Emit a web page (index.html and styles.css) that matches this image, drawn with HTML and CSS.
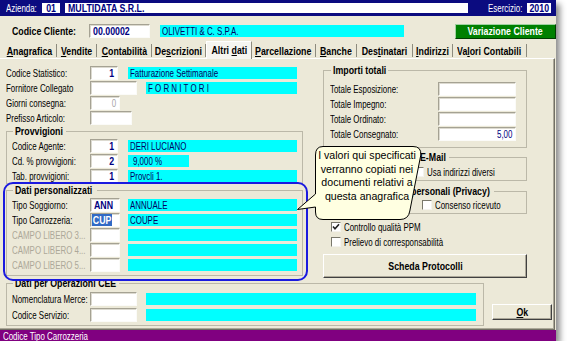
FILE: index.html
```html
<!DOCTYPE html>
<html lang="it">
<head>
    <meta charset="UTF-8">
    <title>Anagrafica Clienti - Altri dati</title>
    <link rel="stylesheet" href="styles.css">
</head>
<body>
    <div class="window">
        <div class="topbar">
            <span class="tb-label az tx">Azienda:</span>
            <span class="tb-box tb-code"><span class="tx b c">01</span></span>
            <span class="tb-box tb-name"><span class="tx b">MULTIDATA S.R.L.</span></span>
            <span class="tb-label es tx">Esercizio:</span>
            <span class="tb-box tb-year"><span class="tx b c">2010</span></span>
        </div>

        <div class="client-row">
            <span class="client-label tx b">Codice Cliente:</span>
            <span class="field client-code"><span class="tx b">00.00002</span></span>
            <span class="cyan client-name"><span class="tx">OLIVETTI &amp; C. S.P.A.</span></span>
            <span class="btn-green"><span class="tx b c">Variazione Cliente</span></span>
        </div>

        <div class="tabs">
            <span class="tab t-ana"><span class="tx b c"><u>A</u>nagrafica</span></span>
            <span class="tab t-ven"><span class="tx b c"><u>V</u>endite</span></span>
            <span class="tab t-con"><span class="tx b c"><u>C</u>ontabilità</span></span>
            <span class="tab t-des"><span class="tx b c">De<u>s</u>crizioni</span></span>
            <span class="tab t-alt active"><span class="tx b c">Altri <u>d</u>ati</span></span>
            <span class="tab t-par"><span class="tx b c"><u>P</u>arcellazione</span></span>
            <span class="tab t-ban"><span class="tx b c"><u>B</u>anche</span></span>
            <span class="tab t-dst"><span class="tx b c">Des<u>t</u>inatari</span></span>
            <span class="tab t-ind"><span class="tx b c"><u>I</u>ndirizzi</span></span>
            <span class="tab t-val"><span class="tx b c">Va<u>l</u>ori Contabili</span></span>
        </div>

        <div class="page">
            <div class="cols">
                <div class="left-col">
                    <div class="row">
                        <span class="lbl tx">Codice Statistico:</span>
                        <span class="field num w28"><span class="tx b r">1</span></span>
                        <span class="cyan"><span class="tx">Fatturazione Settimanale</span></span>
                    </div>
                    <div class="row">
                        <span class="lbl tx">Fornitore Collegato</span>
                        <span class="field w47"></span>
                        <span class="cyan spaced"><span class="tx">F O R N I T O R I</span></span>
                    </div>
                    <div class="row">
                        <span class="lbl tx">Giorni consegna:</span>
                        <span class="field num w30 dim"><span class="tx r">0</span></span>
                    </div>
                    <div class="row">
                        <span class="lbl tx">Prefisso Articolo:</span>
                        <span class="field w42"></span>
                    </div>

                    <fieldset class="group provv">
                        <legend class="lg-provv"><span class="tx b">Provvigioni</span></legend>
                        <div class="row">
                            <span class="lbl tx">Codice Agente:</span>
                            <span class="field num w28"><span class="tx b r">1</span></span>
                            <span class="cyan"><span class="tx">DERI LUCIANO</span></span>
                        </div>
                        <div class="row">
                            <span class="lbl tx">Cd. % provvigioni:</span>
                            <span class="field num w28"><span class="tx b r">2</span></span>
                            <span class="cyan short"><span class="tx">9,000 %</span></span>
                        </div>
                        <div class="row">
                            <span class="lbl tx">Tab. provvigioni:</span>
                            <span class="field num w28"><span class="tx b r">1</span></span>
                            <span class="cyan"><span class="tx">Provcli 1.</span></span>
                        </div>
                    </fieldset>

                    <fieldset class="group personal">
                        <legend class="lg-pers"><span class="tx b">Dati personalizzati</span></legend>
                        <div class="row">
                            <span class="lbl tx">Tipo Soggiorno:</span>
                            <span class="field w30"><span class="tx b">ANN</span></span>
                            <span class="cyan wide-gap"><span class="tx">ANNUALE</span></span>
                        </div>
                        <div class="row">
                            <span class="lbl tx">Tipo Carrozzeria:</span>
                            <span class="field w30"><span class="tx b selected">CUP</span></span>
                            <span class="cyan wide-gap"><span class="tx">COUPE</span></span>
                        </div>
                        <div class="row">
                            <span class="lbl tx off">CAMPO LIBERO 3...</span>
                            <span class="field w30"></span>
                            <span class="cyan wide-gap"></span>
                        </div>
                        <div class="row">
                            <span class="lbl tx off">CAMPO LIBERO 4...</span>
                            <span class="field w30"></span>
                            <span class="cyan wide-gap"></span>
                        </div>
                        <div class="row">
                            <span class="lbl tx off">CAMPO LIBERO 5...</span>
                            <span class="field w30"></span>
                            <span class="cyan wide-gap"></span>
                        </div>
                    </fieldset>
                </div>

                <div class="right-col">
                    <fieldset class="group totals">
                        <legend class="lg-tot"><span class="tx b">Importi totali</span></legend>
                        <div class="row">
                            <span class="lbl tx">Totale Esposizione:</span>
                            <span class="field num w78"></span>
                        </div>
                        <div class="row">
                            <span class="lbl tx">Totale Impegno:</span>
                            <span class="field num w78"></span>
                        </div>
                        <div class="row">
                            <span class="lbl tx">Totale Ordinato:</span>
                            <span class="field num w78"></span>
                        </div>
                        <div class="row">
                            <span class="lbl tx">Totale Consegnato:</span>
                            <span class="field num w78"><span class="tx r">5,00</span></span>
                        </div>
                    </fieldset>

                    <fieldset class="group email">
                        <legend class="lg-mail"><span class="tx b">E-Mail</span></legend>
                        <div class="check-row">
                            <span class="chk"></span><span class="tx">Usa indirizzi diversi</span>
                        </div>
                    </fieldset>

                    <fieldset class="group privacy">
                        <legend class="lg-priv"><span class="tx b">Dati personali (Privacy)</span></legend>
                        <div class="check-row">
                            <span class="chk"></span><span class="tx">Consenso ricevuto</span>
                        </div>
                    </fieldset>

                    <div class="check-row loose first">
                        <span class="chk">
                            <svg width="8" height="8" viewBox="0 0 8 8"><polyline points="1,3.5 3,5.8 7,1.2" fill="none" stroke="#222" stroke-width="1.6"/></svg>
                        </span><span class="tx">Controllo qualità PPM</span>
                    </div>
                    <div class="check-row loose">
                        <span class="chk"></span><span class="tx">Prelievo di corresponsabilità</span>
                    </div>

                    <div class="btn protocol"><span class="tx b c">Scheda Protocolli</span></div>
                </div>
            </div>

            <div class="bottom">
                <fieldset class="group cee">
                    <legend class="lg-cee"><span class="tx b">Dati per Operazioni CEE</span></legend>
                    <div class="row">
                        <span class="lbl tx">Nomenclatura Merce:</span>
                        <span class="field w47"></span>
                        <span class="cyan"></span>
                    </div>
                    <div class="row">
                        <span class="lbl tx">Codice Servizio:</span>
                        <span class="field w47"></span>
                        <span class="cyan"></span>
                    </div>
                </fieldset>
                <div class="btn ok"><span class="tx b c"><u>O</u>k</span></div>
            </div>

            <!-- evidenziazione e fumetto sopra la finestra -->
            <div class="ring"></div>
            <div class="balloon">
                <svg width="127" height="75" viewBox="0 0 127 75">
                    <path d="M27 0.5 H117 Q125.5 0.5 124.8 9 L113.8 65 Q112.5 73.5 104 73.5 H27 Q19.5 73.5 19.5 66 V61 L1.5 63.5 L19.5 48 V9 Q19.5 0.5 27 0.5 Z" fill="#ffffe1" stroke="#000" stroke-width="1"/>
                </svg>
                <div class="balloon-text">I valori qui specificati verranno copiati nei documenti relativi a questa anagrafica</div>
            </div>
        </div>

        <div class="status"><span class="tx">Codice Tipo Carrozzeria</span></div>
    </div>
</body>
</html>
```

FILE: styles.css
```css
* {
    box-sizing: border-box;
}

body {
    margin: 0;
    background: #fff;
    font-family: "Liberation Sans", Arial, sans-serif;
    font-size: 11px;
    color: #000;
}

/* il font originale è stretto: si comprime il testo in orizzontale */
.tx {
    display: inline-block;
    transform: scaleX(0.72);
    transform-origin: 0 50%;
}
.tx.b {
    font-weight: bold;
    transform: scaleX(0.8);
}
.tx.c {
    transform-origin: 50% 50%;
}
.tx.r {
    transform-origin: 100% 50%;
}

.window {
    width: 556px;
    height: 341px;
    background: #ece9d8;
    display: flex;
    flex-direction: column;
    box-shadow: 4px 4px 6px rgba(0, 0, 0, 0.45);
    white-space: nowrap;
}

/* barra azienda */
.topbar {
    flex: none;
    height: 16px;
    background: #0b0b80;
    color: #fff;
    display: flex;
    align-items: center;
    padding-left: 6px;
}
.tb-label.az {
    width: 36px;
}
.tb-label.es {
    width: 39px;
    margin-left: 20px;
}
.tb-box {
    height: 10px;
    background: #fff;
    color: #000080;
    padding: 0 3px;
    display: flex;
    align-items: center;
}
.tb-code {
    width: 18px;
    justify-content: center;
}
.tb-name {
    width: 403px;
    margin-left: 5px;
}
.tb-year {
    width: 24px;
    justify-content: center;
}

/* codice cliente */
.client-row {
    flex: none;
    height: 16px;
    margin: 7px 0 2px;
    padding-left: 12px;
    display: flex;
    align-items: center;
}
.client-label {
    width: 77px;
}
.client-code {
    width: 61px;
    height: 16px;
}
.client-name {
    flex: none;
    width: 244px;
    height: 14px;
    margin-left: 5px;
    padding-left: 5px;
}
.btn-green {
    width: 101px;
    height: 15px;
    margin-left: 45px;
    background: #008000;
    color: #fff;
    display: flex;
    align-items: center;
    justify-content: center;
    border: 1px solid;
    border-color: #9fd19f #003c00 #003c00 #9fd19f;
}

/* linguette */
.tabs {
    flex: none;
    height: 17px;
    padding-left: 3px;
    display: flex;
}
.tab {
    height: 13px;
    margin-top: 3px;
    display: flex;
    align-items: center;
    justify-content: center;
    border-right: 1px solid #8d8b7e;
}
.tab.active {
    height: 18px;
    margin-top: 0;
    padding-bottom: 2px;
    background: #f6f5f0;
    border-top: 1px solid #fff;
    border-left: 1px solid #fff;
    position: relative;
    z-index: 1;
}
.t-ana { width: 54px; }
.t-ven { width: 40px; }
.t-con { width: 55px; }
.t-des { width: 54px; }
.t-alt { width: 46px; }
.t-par { width: 64px; }
.t-ban { width: 41px; }
.t-dst { width: 56px; }
.t-ind { width: 40px; }
.t-val { width: 74px; }

/* pagina */
.page {
    flex: 1;
    position: relative;
    margin-right: 1px;
    padding: 5px 0 0 6px;
    border-top: 1px solid #fff;
    border-right: 1px solid #716f64;
    border-bottom: 1px solid #716f64;
    box-shadow: inset -1px -1px 0 #aca899;
}
.cols {
    display: flex;
}
.left-col {
    width: 297px;
    margin-top: 1px;
}
.right-col {
    width: 204px;
    margin-left: 20px;
}

.row {
    height: 15px;
    display: flex;
    align-items: center;
}
.lbl {
    flex: none;
    width: 84px;
}
.lbl.off {
    color: #aca899;
}
.group .lbl {
    width: 78px;
}

.field {
    flex: none;
    height: 14px;
    padding: 0 3px;
    background: #fff;
    color: #000080;
    display: flex;
    align-items: center;
    border: 1px solid;
    border-color: #a5a293 #fbfbf8 #fbfbf8 #a5a293;
    box-shadow: inset 1px 1px 0 #dcdad0;
}
.field.num {
    justify-content: flex-end;
}
.field.dim {
    color: #a5a5a5;
}
.w28 { width: 28px; }
.w30 { width: 30px; }
.w42 { width: 42px; }
.w47 { width: 47px; }
.w78 { width: 78px; }

.selected {
    background: #316ac5;
    color: #fff;
    padding: 0 1px;
    margin-left: -2px;
}

.cyan {
    flex: 1;
    height: 12px;
    margin: 0 6px 0 10px;
    padding-left: 2px;
    background: #00ffff;
    color: #000060;
    display: flex;
    align-items: center;
}
.cyan.spaced {
    margin-left: 9px;
}
.cyan.short {
    flex: none;
    width: 61px;
    padding-left: 5px;
}
.group .cyan {
    margin-right: 0;
}
.cyan.wide-gap {
    margin-left: 8px;
}

/* riquadri */
.group {
    margin: 0;
    min-width: 0;
    padding: 0 5px;
    border: 1px solid #bbb8a8;
}
.group legend {
    height: 13px;
    line-height: 13px;
    margin-left: 1px;
    padding: 0 2px;
}
.lg-provv { width: 53px; }
.lg-pers { width: 84px; }
.lg-tot { width: 57px; }
.lg-mail { width: 31px; }
.lg-priv { width: 104px; }
.lg-cee { width: 106px; }

.provv {
    padding-bottom: 0;
}
.personal {
    padding-bottom: 3px;
}
.totals {
    padding: 4px 5px 6px 6px;
}
.totals .lbl {
    width: 108px;
}
.email {
    margin-top: 3px;
    padding: 2px 0 2px 90px;
}
.email legend {
    margin-left: 4px;
}
.privacy {
    margin-top: 4px;
    padding: 1px 0 2px 98px;
}
.privacy legend {
    margin-left: -32px;
}

.check-row {
    height: 12px;
    display: flex;
    align-items: center;
}
.check-row.loose {
    height: 15px;
    padding-left: 8px;
}
.check-row.first {
    margin-top: 5px;
}
.chk {
    flex: none;
    width: 10px;
    height: 10px;
    margin-right: 3px;
    background: #fff;
    border: 1px solid;
    border-color: #7a786c #f4f3ee #f4f3ee #7a786c;
    display: flex;
    align-items: center;
    justify-content: center;
}

.btn {
    background: #ece9d8;
    display: flex;
    align-items: center;
    justify-content: center;
    border: 1px solid;
    border-color: #fff #404040 #404040 #fff;
    box-shadow: inset -1px -1px 0 #aca899;
}
.protocol {
    height: 24px;
    margin-top: 5px;
}

.bottom {
    display: flex;
    margin-top: -1px;
}
.cee {
    width: 478px;
    padding: 1px 7px 2px 5px;
}
.cee .row {
    height: 16px;
}
.cee .cyan {
    margin-left: 9px;
}
.ok {
    width: 60px;
    height: 16px;
    margin: 0 0 6px 8px;
    align-self: flex-end;
}

/* evidenziazione */
.ring {
    position: absolute;
    left: 3px;
    top: 123px;
    width: 305px;
    height: 99px;
    border: 2px solid #1a1adf;
    border-radius: 10px;
}
.balloon {
    position: absolute;
    left: 296px;
    top: 87px;
    width: 127px;
    height: 75px;
}
.balloon svg {
    position: absolute;
    left: 0;
    top: 0;
}
.balloon-text {
    position: absolute;
    left: 19px;
    top: 0;
    width: 104px;
    padding: 3px 0 0;
    text-align: center;
    white-space: normal;
    font-size: 10.6px;
    line-height: 13.5px;
}

.status {
    flex: none;
    height: 11px;
    padding-left: 3px;
    background: #800080;
    color: #fff;
    display: flex;
    align-items: center;
}
```
